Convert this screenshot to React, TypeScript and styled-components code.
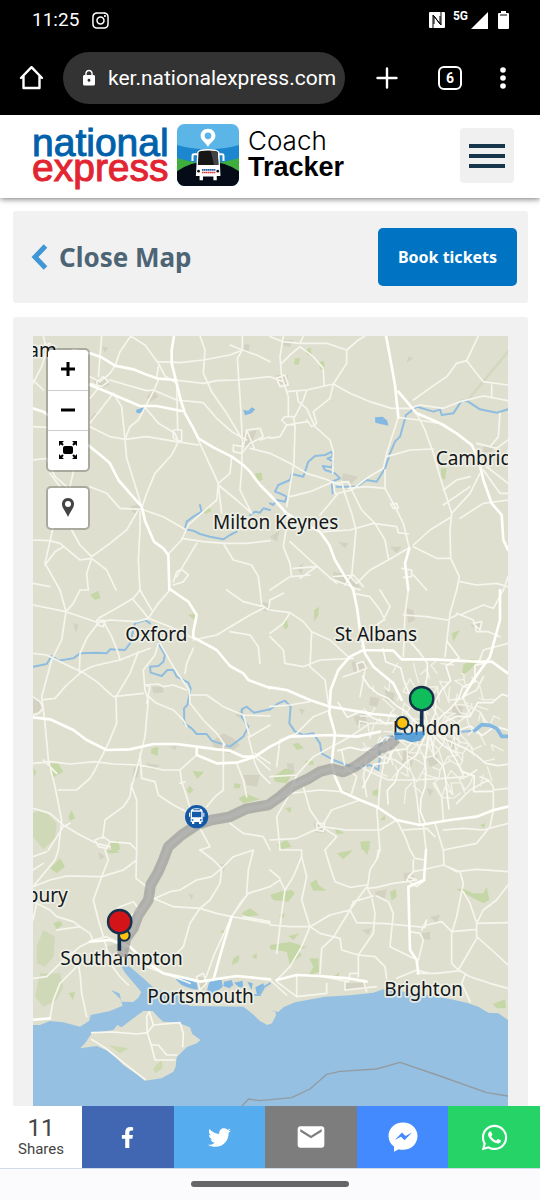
import React from "react";
import styled, { createGlobalStyle } from "styled-components";
import { FaFacebookF, FaInstagram, FaTwitter, FaWhatsapp } from "react-icons/fa";
import { MdEmail, MdLock } from "react-icons/md";

const GlobalStyle = createGlobalStyle`
  * { box-sizing: border-box; }
  body { margin: 0; background: #fff; font-family: "Noto Sans", sans-serif; }
  button, input { font: inherit; border: 0; padding: 0; margin: 0; }
  button { cursor: pointer; }
  a { color: inherit; text-decoration: none; }
  svg { display: block; flex: none; }
`;

const Screen = styled.div`
  display: flex;
  flex-direction: column;
  height: 100vh;
  overflow: hidden;
`;

/* ---------- phone and browser bars ---------- */

const StatusBar = styled.div`
  display: flex;
  align-items: center;
  gap: 12px;
  height: 40px;
  padding: 0 31px 0 32px;
  background: #000;
  color: #fff;
  font-family: Roboto, sans-serif;
`;

const Clock = styled.time`
  font-size: 19px;
  font-weight: 400;
  line-height: 24px;
`;

const StatusIcons = styled.div`
  display: flex;
  align-items: center;
  margin-left: auto;
`;

const Network = styled.span`
  margin: 0 3px 8px 8px;
  font-size: 12px;
  font-weight: 700;
  line-height: 14px;
`;

const BatterySlot = styled.span`
  margin-left: 10px;
`;

const BrowserBar = styled.div`
  display: flex;
  align-items: center;
  height: 75px;
  padding: 0 27px 0 19px;
  background: #000;
  color: #fff;
`;

const BarButton = styled.button<{ $gap?: number }>`
  display: flex;
  align-items: center;
  justify-content: center;
  margin-left: ${(p) => p.$gap ?? 0}px;
  background: none;
  color: #fff;
`;

const AddressBar = styled.label`
  display: flex;
  flex: 1;
  align-items: center;
  gap: 10px;
  min-width: 0;
  height: 52px;
  margin-left: 19px;
  padding: 0 8px 0 17px;
  border-radius: 26px;
  background: #333;
`;

const AddressInput = styled.input`
  flex: 1;
  min-width: 0;
  background: none;
  outline: none;
  color: #fff;
  font-family: Roboto, sans-serif;
  font-size: 21px;
  line-height: 26px;
`;

const TabCount = styled.span`
  display: flex;
  align-items: center;
  justify-content: center;
  width: 24px;
  height: 24px;
  border: 2px solid #fff;
  border-radius: 6px;
  font-family: Roboto, sans-serif;
  font-size: 14px;
  font-weight: 700;
  line-height: 20px;
`;

/* ---------- site header ---------- */

const SiteHeader = styled.header`
  position: relative;
  display: flex;
  align-items: center;
  height: 83px;
  padding: 0 26px 2px 32px;
  background: #fff;
  box-shadow: 0 1px 6px rgba(0, 0, 0, 0.55);
  z-index: 1;
`;

const BrandLink = styled.a`
  display: flex;
  align-items: center;
  padding-bottom: 2px;
`;

const Wordmark = styled.span`
  display: flex;
  flex-direction: column;
  width: 145px;
  font-family: "Liberation Sans", sans-serif;
  font-size: 39px;
  line-height: 25px;
`;

const WordLine = styled.span<{ $color: string }>`
  color: ${(p) => p.$color};
  -webkit-text-stroke: 1px ${(p) => p.$color};
`;

const ProductName = styled.span`
  display: flex;
  flex-direction: column;
  margin-left: 9px;
  padding-bottom: 1px;
  color: #000;
  font-family: "Liberation Sans", sans-serif;
  font-size: 27px;
  line-height: 27px;
`;

const LightWord = styled.span`
  font-family: Inter, sans-serif;
  font-size: 26px;
  font-weight: 300;
`;

const MenuButton = styled.button`
  display: flex;
  align-items: center;
  justify-content: center;
  width: 54px;
  height: 55px;
  margin-left: auto;
  border-radius: 4px;
  background: #f0f0f0;
`;

/* ---------- page content ---------- */

const Content = styled.main`
  display: flex;
  flex: 1;
  flex-direction: column;
  gap: 14px;
  min-height: 0;
  padding: 13px 12px 0 13px;
`;

const TitleCard = styled.section`
  display: flex;
  align-items: center;
  justify-content: space-between;
  padding: 17px 11px 17px 18px;
  border-radius: 3px;
  background: #f1f1f1;
`;

const CloseLink = styled.a`
  display: flex;
  align-items: center;
  gap: 11px;
  color: #4d6475;
  font-size: 26px;
  font-weight: 700;
  line-height: 36px;
`;

const BookButton = styled.button`
  width: 139px;
  height: 58px;
  border-radius: 5px;
  background: #0074c2;
  color: #fff;
  font-size: 16px;
  font-weight: 700;
  line-height: 22px;
`;

const MapCard = styled.section`
  display: flex;
  flex: 1;
  min-height: 0;
  padding: 19px 20px 0;
  border-radius: 3px 3px 0 0;
  background: #f1f1f1;
`;

const MapFrame = styled.div`
  position: relative;
  flex: 1;
  min-width: 0;
  overflow: hidden;
`;

const MapDrawing = styled.svg`
  width: 100%;
  height: 100%;
`;

const MapControls = styled.div`
  position: absolute;
  top: 12px;
  left: 13px;
  display: flex;
  flex-direction: column;
  gap: 14px;
`;

const ControlGroup = styled.div`
  display: flex;
  flex-direction: column;
  width: 44px;
  border: 2px solid rgba(0, 0, 0, 0.24);
  border-radius: 5px;
  background: #fff;
  background-clip: padding-box;
`;

const ControlButton = styled.button`
  display: flex;
  align-items: center;
  justify-content: center;
  height: 40px;
  padding-bottom: 2px;
  border-radius: 3px;
  background: none;

  & + & {
    border-top: 1px solid #ccc;
    border-radius: 0 0 3px 3px;
  }
`;

const PlaceLabel = styled.text`
  fill: #14171a;
  stroke: rgba(240, 241, 232, 0.85);
  stroke-width: 11px;
  stroke-linejoin: round;
  paint-order: stroke;
  font-family: "Noto Sans", sans-serif;
  font-size: 57px;
`;

/* ---------- share bar ---------- */

const ShareBar = styled.footer`
  display: grid;
  grid-template-columns: 82px repeat(5, 1fr);
  height: 63px;
  border-bottom: 1px solid #cfdbe8;
  background: #fff;
`;

const ShareCount = styled.div`
  display: flex;
  flex-direction: column;
  align-items: center;
  justify-content: center;
  padding-bottom: 1px;
  color: #444;
  font-family: Roboto, sans-serif;
  font-size: 15px;
  line-height: 18px;
`;

const CountNumber = styled.strong`
  font-size: 24px;
  font-weight: 400;
  line-height: 24px;
`;

const ShareLink = styled.a<{ $color: string }>`
  display: flex;
  align-items: center;
  justify-content: center;
  background: ${(p) => p.$color};
  color: #fff;
`;

const GestureBar = styled.div`
  display: flex;
  align-items: center;
  justify-content: center;
  height: 31px;
  padding-bottom: 2px;
  background: #fbfbfe;
`;

const GestureHandle = styled.span`
  width: 158px;
  height: 6px;
  border-radius: 3px;
  background: #666;
`;

/* ---------- map data: six sheets of 720 x 780 units ---------- */

type Sheet = { x: number; y: number; roads: string[]; motorways: string[]; rivers: string[]; woods: string[]; towns: string[] };

const sheets: Sheet[] = [
  {
    x: 0,
    y: 0,
    motorways: [
      "M0 232 L40 245 L100 290 L180 350 L215 378 L240 400 L265 450 L300 490 L335 530 L345 572 L372 635 L400 655 L415 675 L418 780",
      "M130 60 L180 70 L215 82 L255 107 L310 118 L345 132 L380 145 L435 150",
      "M432 18 L425 60 L425 100 L440 160 L452 210 L465 250 L490 295 L505 325 L550 352 L605 380 L640 405 L660 425 L690 465 L720 495",
      "M180 165 L230 185 L330 228 L380 228 L455 243",
    ],
    roads: [
      "M40 18 L50 60 L35 110 L9 160 M9 60 L60 40",
      "M180 140 L210 155 L240 130 L255 107 L270 65 L302 18",
      "M180 205 L205 175 L200 155 L220 140 L235 155 L215 170 L180 160",
      "M302 18 L345 45 L385 100 L405 138 L440 160",
      "M215 18 L210 80 L205 140",
      "M380 95 L450 98 L520 90 L600 75 L637 60 M380 145 L385 110",
      "M510 18 L525 60 L520 130 L545 185 L590 250 L635 325",
      "M637 18 L637 60 L622 85 L630 200 L637 330 L635 420 L630 480 L665 550",
      "M637 60 L680 75 L720 95 M600 45 L637 60",
      "M435 150 L520 160 L560 152 L620 150 L720 140",
      "M240 150 L290 165 L350 182 L370 180 L440 210 L520 218 L560 265 L605 305 L650 330",
      "M250 190 L275 230 L285 330 L290 385 L320 480 L335 530",
      "M180 280 L230 215 L250 190",
      "M180 290 L240 320 L285 328 L350 320 L440 335 L505 345",
      "M370 185 L385 150 M370 185 L345 232 L325 270 L300 290 L285 328",
      "M345 232 L385 280 L435 310 L445 335 L425 375 L375 430 L350 490 L335 535",
      "M430 300 L455 300 L455 335 L430 325 Z M440 160 L443 300",
      "M180 470 L230 490 L270 535 L335 538 L400 560 L465 598",
      "M505 330 L535 395 L565 460 L560 510 L520 545 L475 585 L455 630 L415 672",
      "M565 465 L620 510 L665 550 M565 465 L575 550",
      "M605 380 L600 430 L565 460",
      "M610 345 L640 350 L650 300 L690 295 L700 320 L660 340 L635 370 L610 365 Z M650 300 L675 360 M690 330 L720 320 M660 355 L720 370",
      "M9 390 L50 385 L75 440 L110 470 M60 430 L90 470 M130 425 L120 470",
      "M125 600 L150 645 L185 680 L240 640 L290 600 L325 540 M330 545 L330 600 L325 690 L330 780",
      "M9 630 L60 632 L90 640 L150 690 L185 685",
      "M185 685 L230 720 L258 780 M185 685 L170 730 L175 780 L150 780",
      "M70 590 L45 700 L90 780 M45 705 L75 665 L100 650",
      "M455 625 L520 635 L585 640 L650 640 L720 632",
      "M580 640 L610 690 L665 705 L685 740 L690 780",
      "M430 755 L440 725 L455 718 L475 735 L460 755 L430 765 M500 640 L440 740",
      "M9 760 L60 770 M9 150 L40 180 M9 290 L50 292",
    ],
    rivers: [
      "M510 525 L515 545 L490 560 L470 575 L465 598 L490 602 L510 612 L540 620 L580 628 L600 615 L620 605 M660 555 L675 545 L690 548 L700 535 L720 540",
    ],
    woods: ["M675 430 L695 428 L698 450 L680 455 Z", "M520 540 L535 530 L545 543 L525 553 Z"],
    towns: ["M190 150 L225 140 L240 165 L205 178 Z", "M350 200 L370 180 L385 200 L360 215 Z", "M635 310 L680 300 L665 345 L630 350 Z", "M300 530 L335 520 L340 545 L310 550 Z", "M195 248 L205 255 L185 278 L182 265 Z", "M645 40 L660 45 L655 70 L638 65 Z", "M215 50 L235 52 L225 68 Z"],
  },
  {
    x: 720,
    y: 0,
    motorways: [
      "M348 18 L358 70 L375 165 L385 262",
      "M0 495 L50 550 L100 580 L150 605 L178 645 L195 690 L225 740 L250 780",
      "M385 185 L440 250 L510 280 L560 310 L605 345 L625 385 L640 450 L665 520 L695 555 L700 630 L714 660",
      "M418 655 L405 700 L415 780",
    ],
    roads: [
      "M0 20 L40 35 L90 40 L170 40 L230 60 L265 30",
      "M265 30 L285 18 M40 18 L30 80 L35 140 L55 200 L55 255",
      "M35 100 L65 70 L90 50 L130 80 L160 115 L162 165 M90 40 L100 18",
      "M0 140 L40 155 L50 185 L110 180 L190 162 L240 190 L300 215 L365 235 L420 235 L450 225 L520 235 L570 215 L640 198 L714 212",
      "M190 162 L230 100 L230 60 M190 162 L180 205 L130 245 L140 280 L125 290 L110 270",
      "M20 145 L45 135 L55 165 L30 170 Z M80 185 L85 215 L110 235 L135 290 L180 330 L190 365 L188 430",
      "M45 260 L70 260 L75 285 L50 285 L35 270 Z M0 325 L30 320 L50 285 L110 275 M75 285 L72 400 L60 470 L50 530",
      "M110 180 L100 210 L75 260",
      "M0 370 L60 400 L110 430 L160 445 L210 465",
      "M60 500 L120 485 L190 455 M150 555 L205 490",
      "M190 460 L235 455 L245 480 L195 492 Z M215 455 L225 492",
      "M245 480 L290 445 L340 415 L350 370 L385 262",
      "M235 475 L290 470 L345 475 M245 480 L275 540 L315 580 L345 630 L355 685",
      "M225 492 L245 550 L258 600 L245 740",
      "M385 262 L445 270 L520 282 L560 310",
      "M430 210 L500 160 L530 140 L560 100 L590 92 L625 18 M590 92 L640 155 L714 165 M665 165 L665 200",
      "M440 250 L465 300 L490 370 L510 440 L545 550",
      "M350 380 L420 360 L490 357 M345 420 L345 475 L375 530 L400 580 L418 655",
      "M362 522 L380 520 L385 535 L370 535 Z",
      "M545 550 L540 600 L542 685 L568 740 L560 780",
      "M545 560 L480 600 L430 645 M545 550 L600 490 L630 430",
      "M520 480 L560 450 L600 440 M520 525 L600 470",
      "M620 340 L680 355 L714 330 M690 250 L685 320 L660 350",
      "M640 420 L690 490 L714 490 M650 410 L714 460 M570 565 L640 520 L714 510",
      "M160 605 L240 600 L310 580 L380 590 L385 608 L415 612",
      "M55 555 L40 650 L60 700 L65 740 L120 735 M60 635 L120 690 L200 760 M70 715 L140 710 L90 745 M0 780 L60 740",
      "M415 655 L355 690 L300 720 L260 760 M430 650 L500 685 L542 685",
      "M395 715 L425 720 L425 740 L400 742 M190 740 L250 735 L280 770 M180 745 L270 780 M225 765 L240 740 L260 760",
      "M570 755 L620 765 L680 760 L714 770 M700 780 L714 740 M430 735 L470 780",
    ],
    rivers: [
      "M0 520 L10 525 L20 510 L45 515 L50 500 L30 490 L15 485 L25 465 L60 450 L65 432 L100 440 L115 395 L135 378 L165 375 L185 365 L188 380 L172 385 L190 395 L185 412 L158 408 L165 420 L195 430 L210 445 L185 455 L188 490",
      "M200 470 L260 470 L290 450 L320 455 L345 415 L360 370 L375 335 L390 320 L408 255 L440 230 L490 245 L510 238 L515 255 L550 250 L575 212 L590 212 L630 238 L680 248 L714 238",
    ],
    woods: ["M75 85 L92 85 L85 105 L72 103 Z", "M105 62 L122 52 L125 75 L112 75 Z", "M147 95 L162 92 L165 120 L150 118 Z", "M512 415 L530 415 L525 450 L515 445 Z"],
    towns: ["M40 30 L70 30 L60 50 L40 48 Z", "M415 80 L430 85 L410 98 Z", "M220 430 L265 440 L245 460 L215 450 Z", "M20 135 L55 135 L50 165 L25 160 Z", "M640 350 L675 345 L665 370 L640 365 Z", "M190 725 L240 735 L270 770 L250 780 L190 745 Z", "M360 650 L395 650 L380 670 Z", "M80 715 L100 700 L95 735 Z", "M205 635 L235 640 L225 655 Z", "M0 620 L30 600 L20 635 Z"],
  },
  {
    x: 0,
    y: 780,
    motorways: [
      "M418 -4 L445 15 L475 35 L500 75 L490 125 L490 142 L560 180 L600 228 L640 250 L655 270 L720 294",
      "M9 382 L60 388 L130 420 L170 450 L230 480 L300 478 L370 462 L440 462 L500 470 L560 478 L600 482 L640 500 L675 500 L720 470",
      "M500 470 L500 495 L560 520 L620 518 L675 500",
    ],
    roads: [
      "M90 0 L108 65 L95 150 L65 210 L35 320 L45 400 L55 510 L75 590 L95 690 L85 780",
      "M9 45 L108 65 L205 98 L240 90 L320 95 L355 85 L420 110 L490 145",
      "M108 65 L130 40 L150 0 M205 98 L170 145 L150 190 L148 245 M200 90 L225 92 L220 110 L202 105 Z",
      "M220 95 L245 140 L265 190 L270 210",
      "M205 85 L250 60 L310 25 L330 0 M310 30 L340 65 L355 85 M330 0 L365 60 M420 0 L385 40 L355 85",
      "M9 190 L50 195 L110 225 L155 245 L190 228 L270 210 L320 190 L360 175",
      "M35 330 L75 325 L110 285 L155 245 L200 275 L250 320 L340 310",
      "M325 185 L300 250 L258 320 L260 400 L235 460 L195 540 L180 565 L140 600 L85 600",
      "M385 160 L375 195 L340 240 L345 300 L355 330 L345 440 L330 500 L305 590 L320 630 L320 780",
      "M345 285 L360 290 L350 340 M345 285 L385 282 L400 290 L430 285 L470 300 M350 315 L380 340 L430 360 L460 390 L470 410",
      "M390 160 L430 230 L450 260 L478 300 L480 340 L520 390 L560 430 L585 465",
      "M490 150 L560 135 L610 105 L660 75 L700 55 M490 175 L470 220 L465 250",
      "M690 0 L695 45 L715 60 L720 30 M590 0 L640 35 L700 50 M600 125 L660 135 L685 170 L690 220",
      "M480 315 L530 315 L580 350 L640 375 L720 378",
      "M9 320 L30 335 L40 355 L25 370 L9 375",
      "M9 520 L60 515 L120 522 L195 515 L250 522 L330 525 L400 540 L450 540 L500 495",
      "M40 510 L80 550 M330 490 L335 565 L375 575 L385 615 L430 645 L470 665",
      "M450 540 L455 575 L470 620 L485 670 M450 580 L465 575",
      "M580 460 L580 600 L555 620 L530 650 M620 520 L640 570 L650 620",
      "M655 440 L675 520 L690 550 L720 580 M675 490 L720 520 M675 500 L720 540 M640 375 L660 440 L720 405",
      "M9 655 L60 670 L100 705 L150 735 L200 760 L240 770",
      "M55 780 L100 710 L120 700 M305 580 L300 620 L280 650 L225 690 L218 745",
      "M195 750 L220 740 L240 755 L230 775 L205 770 Z M240 755 L300 760 L320 780",
      "M510 715 L540 770 L510 780 M600 700 L640 730 L700 740 L720 780",
    ],
    rivers: [
      "M9 230 L50 222 L65 198 L85 212 L130 205 L150 190 L200 188 L230 190 L240 178 L285 180 L300 160 L315 100 L345 90 L360 100",
      "M385 160 L405 195 L400 215 L385 228 L360 230 L362 248 L395 258 L412 240 L430 240 L440 260 L475 278 L482 295 L472 345 L462 355 L463 400 L485 415 L500 432 L530 432 L545 452 L600 470 L640 440 L655 410 L635 380 L635 358 L650 350 L672 368 L720 358",
    ],
    woods: ["M180 15 L205 2 L212 25 L195 30 Z", "M50 520 L85 520 L100 545 L70 562 Z", "M365 475 L385 470 L383 498 L362 490 Z", "M487 543 L522 545 L502 567 Z", "M115 680 L125 660 L135 685 L120 692 Z", "M470 600 L480 587 L490 600 L478 613 Z", "M612 580 L632 582 L630 595 L612 595 Z", "M625 625 L650 612 L690 628 L640 640 Z", "M240 760 L265 750 L270 780 L245 780 Z", "M475 75 L495 70 L493 90 Z", "M9 535 L20 545 L12 560 Z"],
    towns: ["M365 290 L400 290 L400 308 L370 310 Z", "M545 455 L580 430 L610 445 L630 465 L600 490 L555 480 Z", "M615 375 L640 355 L640 390 Z", "M690 35 L720 40 L720 65 L695 60 Z", "M640 555 L690 555 L680 590 L650 585 Z", "M310 535 L330 525 L325 560 L310 570 Z", "M345 520 L390 525 L370 540 Z", "M130 100 L145 105 L138 130 Z", "M9 315 L35 335 L30 365 L9 370 Z", "M420 470 L440 468 L435 480 Z"],
  },
  {
    x: 720,
    y: 780,
    motorways: [
      "M0 292 L50 300 L120 330 L180 350 L250 362 L310 372 L375 378",
      "M250 0 L262 60 L270 120 L285 190 L310 230 L370 280 L395 330",
      "M240 200 L280 180 L370 182 L395 208 L490 208 L560 212 L620 215 L665 215 L714 250",
      "M240 200 L205 240 L182 300 L178 370 L195 430 L185 520 L195 560 L215 605 L270 630 L320 650 L380 690 L450 705 L540 690 L620 680 L665 662 L714 650",
      "M690 0 L690 90 L660 200 L610 270 L580 320",
      "M0 470 L60 440 L180 435 L260 440 L330 425",
    ],
    roads: [
      "M0 60 L60 68 L100 95 L125 125 L180 150 L240 205 M0 140 L40 180 L45 220 L100 230 L150 210 L250 205",
      "M125 125 L120 230 L165 270 L175 340 M60 68 L40 100 L0 130",
      "M415 0 L405 70 L400 200 M400 75 L470 80 L530 90 L560 75 M560 0 L540 70 L525 200",
      "M560 70 L610 90 L620 125 L655 125 L690 140 M610 100 L635 95 L630 120 Z M570 75 L640 45 L670 55 L700 0",
      "M330 0 L360 50 L340 90 L300 120 L275 170 M250 10 L300 20 L330 60 L345 90",
      "M20 530 L30 450 L80 430 L130 380 L180 360 M0 350 L60 345 L120 335",
      "M0 560 L80 555 L130 500 L185 470 L240 440 L300 400 L375 400",
      "M80 555 L60 610 L20 680 L30 780 M0 640 L60 610 L150 600 L215 605",
      "M100 590 L120 660 L155 710 L80 745 L0 750 M155 710 L230 720 L330 720 L380 690",
      "M155 710 L200 740 L165 780 M155 710 L185 660 L270 630 M140 700 L165 700 L160 725 L140 720 Z",
      "M320 650 L325 720 L330 780 M345 500 L330 580 L325 650 M380 690 L405 740 L420 780",
      "M450 705 L440 620 L430 560 M520 690 L515 620 L495 580 M495 700 L520 780 M460 705 L468 780",
      "M670 660 L670 590 L655 570 L630 560 M670 600 L714 595 M670 660 L660 710 L620 760 L520 780",
      "M580 320 L620 300 L640 260 M540 330 L580 325 L600 370 L560 400 M625 220 L640 180 L714 160",
      "M520 720 L580 715 L640 720 L714 700 M400 720 L470 715 L495 740 M0 30 L40 10",
      "M280 475 L330 500 L375 510 L420 540 M255 520 L300 545 L355 570 L430 570 L520 565 L590 560 L620 540",
      "M215 480 L225 530 L260 560 L245 610 M290 510 L280 560 L290 620 M560 640 L600 600 L655 570",
      "M265 245 L290 235 L280 215 L260 220 Z M220 260 L265 245 M285 240 L270 320",
    ],
    rivers: [
      "M0 358 L25 340 L45 332 L62 350 L58 400 L75 425 L100 435 L130 430 L150 460 L155 490 L190 510 L230 525 L260 535 L300 525 L325 540 L330 500 L325 470 L350 440 L380 438",
      "M575 425 L610 422",
    ],
    woods: ["M38 100 L50 85 L55 110 L45 120 Z", "M132 60 L147 50 L145 75 L133 95 Z", "M580 225 L600 207 L625 210 L600 240 L575 258 Z", "M68 462 L85 458 L102 475 L80 480 Z", "M10 560 L45 535 L70 545 L50 580 L15 575 Z", "M105 512 L130 512 L130 525 L108 522 Z", "M308 602 L325 597 L322 620 L308 615 Z", "M330 690 L345 675 L345 690 Z", "M195 715 L225 730 L200 732 Z", "M270 755 L300 752 L298 780 L275 780 Z", "M20 765 L50 750 L65 770 L35 778 Z", "M45 655 L65 652 L60 670 Z", "M630 705 L645 700 L643 715 Z", "M545 130 L570 120 L550 155 Z"],
    towns: ["M300 320 L330 325 L320 350 L298 345 Z", "M345 300 L375 310 L370 335 L350 330 Z", "M470 300 L500 310 L505 340 L475 330 Z", "M550 340 L580 350 L570 390 L545 370 Z", "M400 480 L430 500 L425 530 L395 520 Z", "M470 500 L500 490 L505 520 L480 530 Z", "M345 460 L365 470 L360 500 L340 490 Z", "M520 440 L560 450 L550 480 L520 470 Z", "M250 380 L285 370 L290 400 L260 405 Z", "M410 55 L430 60 L435 90 L415 100 Z", "M245 215 L290 215 L290 245 L250 245 Z", "M130 700 L170 700 L165 730 L140 728 Z", "M50 520 L70 520 L75 560 L55 550 Z", "M470 595 L490 600 L480 620 Z", "M220 600 L235 605 L230 620 Z", "M85 355 L105 360 L95 375 Z", "M600 105 L635 95 L625 125 Z"],
  },
  {
    x: 0,
    y: 1560,
    motorways: [
      "M0 510 L60 505 M180 275 L240 270 L300 290 L340 330 L400 370 L470 385 L510 395 L620 378 L720 388",
      "M550 390 L575 300 L605 200",
    ],
    roads: [
      "M9 110 L60 90 L110 78 L215 80 L280 60 L320 30 M215 80 L235 30 L225 0 M85 0 L75 30 L9 110",
      "M320 0 L318 85 L350 110 M215 80 L190 150 L205 210 L225 275",
      "M9 210 L20 160 L60 180 L80 200 L130 215 L150 230 L180 250 L190 275",
      "M9 385 L50 380 L90 340 L150 290 L190 270 L230 260 L290 290",
      "M60 505 L70 450 L90 400 L145 345 L150 370 L155 430 L170 500",
      "M80 240 L150 230 M240 200 L270 170 L310 155 L325 175 L300 200",
      "M225 275 L240 340 L270 380 L295 405 M370 145 L430 170 L510 175 L560 190 L605 200 L720 220",
      "M375 145 L420 125 L450 120 L500 90 L545 80 L575 55 L610 20 L670 0",
      "M510 0 L550 30 L575 55 L570 100 L540 150 L510 175 L480 220 L460 290 L420 330",
      "M720 110 L655 130 L605 200 M670 0 L655 60 L650 130 M655 130 L630 160 L605 200 M605 200 L550 320 L525 390",
      "M640 200 L720 215 M500 380 L520 370 L530 400 L510 420 Z",
      "M9 20 L50 5 M9 60 L40 40",
      "M350 350 L430 380 L480 400",
    ],
    rivers: ["M720 400 L695 415 L690 435 L675 435"],
    woods: ["M60 55 L90 25 L105 50 L80 70 Z", "M70 220 L90 212 L98 225 L80 238 Z", "M635 190 L660 175 L688 195 L650 200 Z", "M610 325 L628 315 L625 335 L605 345 Z", "M570 245 L590 235 L590 255 Z", "M665 320 L680 310 L680 328 Z", "M230 0 L260 0 L268 8 L235 10 Z", "M115 430 L135 425 L130 450 Z"],
    towns: ["M230 290 L290 270 L320 310 L340 350 L270 350 Z", "M565 45 L590 40 L580 65 Z", "M475 130 L490 135 L485 150 Z", "M500 380 L530 385 L520 420 L500 415 Z", "M205 5 L225 20 L210 30 Z"],
  },
  {
    x: 720,
    y: 1560,
    motorways: ["M468 0 L462 90 L415 110 L420 300 L440 330 L445 370", "M20 390 L80 375 L150 378 L235 385 L290 395"],
    roads: [
      "M0 110 L30 90 L45 120 L35 190 L20 310 M0 60 L30 85 M45 120 L70 80 L95 20 L95 0 L30 0",
      "M95 20 L110 80 L95 150 L120 230 L95 290 L60 350 L20 390 M0 225 L60 230 L120 230",
      "M165 0 L180 50 L195 95 L240 112 L290 105 M330 0 L320 30 L325 0 M325 20 L300 60 L292 115 L305 140 L315 190 L310 250 L265 315 L265 380",
      "M290 110 L240 180 L190 262 L155 295 L150 370 M240 180 L180 195 L120 230 L150 250 L210 265 L215 300 L265 315 L315 320 L345 350 L350 385",
      "M310 138 L250 155 L240 180 L260 218 L340 220 L420 228 L465 232 L470 210 L455 240",
      "M320 138 L355 155 L370 190 L360 290 L430 325",
      "M292 115 L320 112 L370 100 L410 95 L440 90 L415 80 L430 65 L455 60",
      "M420 0 L435 25 L465 30 M430 30 L430 65 L410 90 L440 110 L465 90 M455 60 L520 45 L570 65 L580 100 L570 150 L560 200 L545 250",
      "M520 0 L522 45 L560 65 L620 58 L714 65 M580 125 L600 160 L620 220 L620 260 L665 300 L714 345",
      "M714 105 L680 150 L640 180 L620 220 L714 218",
      "M470 225 L515 215 L545 245 L620 238 M420 245 L450 250 L460 270 L445 330",
      "M620 265 L600 300 L565 360 L545 340 L545 250",
      "M440 370 L500 370 L570 362 L600 380 L660 400 L714 415",
      "M380 385 L440 360 L480 370 M20 395 L80 440 L170 430 M80 375 L80 440 M170 400 L170 430",
      "M150 378 L235 395 L240 370 L265 370 M225 395 L225 420 L320 410 M280 390 L290 425 M0 390 L50 435",
      "M585 375 L575 400 L600 455",
    ],
    rivers: [],
    woods: ["M200 10 L250 0 L220 28 Z", "M280 0 L295 0 L292 15 Z", "M120 100 L140 88 L145 105 L170 122 L130 122 Z", "M0 135 L30 125 L65 120 L75 130 L55 155 L10 150 Z", "M55 258 L88 250 L70 270 Z", "M0 285 L60 275 L110 292 L85 300 L95 315 L60 345 L50 305 L0 298 Z", "M118 325 L145 325 L148 365 L115 378 L130 350 Z", "M190 380 L210 365 L200 390 Z", "M360 125 L378 118 L380 140 L365 152 Z", "M560 118 L575 115 L610 130 L640 130 L650 110 L658 150 L640 160 L610 145 Z", "M668 462 L705 448 L708 475 L680 475 Z", "M25 195 L45 190 L40 205 Z"],
    towns: ["M480 200 L510 195 L500 220 Z", "M455 250 L480 245 L480 270 L460 268 Z", "M400 70 L430 65 L430 95 L405 95 Z", "M315 125 L350 118 L345 145 L320 140 Z", "M225 400 L290 398 L290 415 L225 418 Z", "M275 240 L305 235 L295 255 Z"],
  },
];

/* Forest and heath, drawn paler than the small woods. */
const heathPath =
  "M9 1450 L30 1440 L50 1450 L80 1480 L75 1525 L40 1558 L9 1520 Z M20 1850 L40 1800 L75 1820 L70 1880 L45 1910 L20 1900 Z M30 1930 L90 1930 L100 1970 L80 2010 L40 2030 L15 2000 Z";

/* City streets: a loose lattice with repeatable jitter, thinning out from the centre. */
const centre = { x: 1195, y: 1200 };
const chance = (n: number) => {
  const v = Math.sin(n * 127.1 + 11.7) * 43758.5453;
  return v - Math.floor(v);
};

const streetNode = (col: number, row: number) => {
  const seed = col * 31 + row * 57;
  const x = col * 25 + (chance(seed) - 0.5) * 22;
  const y = row * 25 + (chance(seed + 7) - 0.5) * 22;
  return { x: Math.round(centre.x + x * 0.94 - y * 0.34), y: Math.round(centre.y + x * 0.34 + y * 0.94) };
};

const cityStreets: string[] = [];
for (let col = -9; col <= 9; col++) {
  for (let row = -9; row <= 9; row++) {
    const spread = Math.hypot(col, row);
    if (spread > 8.6) continue;
    const keep = 1 - spread / 11;
    const from = streetNode(col, row);
    [
      [1, 0],
      [0, 1],
      [1, 1],
    ].forEach(([dc, dr], i) => {
      if (chance(col * 13 + row * 101 + i * 17) > keep * (i === 2 ? 0.45 : 0.8)) return;
      const to = streetNode(col + dc, row + dr);
      cityStreets.push(`M${from.x} ${from.y} L${to.x} ${to.y}`);
    });
  }
}

const arterials = Array.from({ length: 15 }, (_, s) => {
  const points = Array.from({ length: 8 }, (_, r) => {
    const angle = (s / 15) * Math.PI * 2 + (chance(s * 9 + r) - 0.5) * 0.22;
    const radius = 18 + r * (32 + chance(s) * 6);
    return `${Math.round(centre.x + Math.cos(angle) * radius)} ${Math.round(centre.y + Math.sin(angle) * radius)}`;
  });
  return "M" + points.join(" L");
});

const seaPath =
  "M0 2085 L30 2085 L60 2073 L100 2077 L150 2090 L178 2072 L182 2055 L240 2043 L278 2027 L272 2008 L243 1980 L268 1990 L275 2015 L310 2016 L325 2003 L334 1987 L318 1967 L285 1928 L268 1900 L290 1905 L305 1915 L340 1945 L362 1965 L380 1980 L440 1990 L480 2028 L640 2030 L668 2052 L690 2073 L712 2085 L726 2080 L738 2056 L736 2045 L718 2040 L745 2046 L760 2032 L795 2017 L885 2000 L960 1996 L1030 1988 L1060 1978 L1160 1990 L1260 2007 L1310 2018 L1345 2030 L1375 2048 L1405 2050 L1434 2070 L1434 2340 L0 2340 Z";

const islePath =
  "M150 2155 L165 2140 L185 2110 L215 2105 L250 2100 L262 2085 L275 2092 L300 2072 L340 2043 L368 2043 L385 2062 L400 2075 L440 2077 L480 2092 L487 2112 L512 2130 L500 2140 L470 2152 L440 2182 L437 2210 L430 2225 L395 2245 L345 2252 L320 2233 L280 2205 L255 2180 L228 2160 L200 2148 Z";

const harbourPaths = [
  "M437 1948 L450 1942 L480 1950 L500 1958 L503 1980 L480 1975 L455 1965 Z",
  "M537 1958 L550 1948 L575 1950 L578 1970 L560 1985 L550 2000 L530 1985 Z",
  "M582 1955 L605 1950 L610 1965 L598 1975 L580 1968 Z",
  "M612 1958 L638 1952 L640 1975 L625 1970 Z",
  "M652 1955 L668 1960 L665 1980 Z",
  "M676 1972 L700 1960 L704 1975 L690 1998 L680 1990 Z",
  "M318 240 L340 232 L345 238 L330 250 L320 249 Z",
  "M640 240 L655 242 L665 232 L676 238 L665 250 L645 256 Z",
  "M1035 262 L1058 260 L1072 272 L1075 287 L1052 282 L1036 278 Z",
];

const routePath =
  "M1098 1226 L1080 1245 L1048 1256 L1010 1285 L975 1310 L940 1326 L905 1316 L870 1325 L835 1346 L785 1370 L750 1400 L715 1425 L650 1436 L600 1460 L545 1470 L500 1485 L455 1515 L415 1550 L400 1590 L385 1625 L362 1665 L355 1710 L325 1755 L310 1795 L288 1825 L276 1880";

const places: { name: string; x: number; y: number; end?: boolean }[] = [
  { name: "Birmingham", x: 80, y: 82, end: true },
  { name: "Milton Keynes", x: 549, y: 597 },
  { name: "Cambridge", x: 1217, y: 405 },
  { name: "Oxford", x: 286, y: 932 },
  { name: "St Albans", x: 914, y: 932 },
  { name: "London", x: 1088, y: 1215 },
  { name: "Salisbury", x: 113, y: 1717, end: true },
  { name: "Southampton", x: 91, y: 1906 },
  { name: "Portsmouth", x: 352, y: 2018 },
  { name: "Brighton", x: 1063, y: 1997 },
];

function CoachMap() {
  return (
    <MapDrawing viewBox="9 18 1425 2310" preserveAspectRatio="xMidYMid slice" role="img" aria-label="Coach route from London to Southampton" fill="none" strokeLinejoin="round" strokeLinecap="round">
      <rect x="0" y="0" width="1440" height="2340" fill="#dfdfcf" />
      <path d={heathPath} fill="#cfd9b8" />
      {sheets.map((s, i) => (
        <g key={i} transform={`translate(${s.x} ${s.y})`}>
          <path d={s.towns.join(" ")} fill="#cfcdbd" opacity="0.75" />
          <path d={s.woods.join(" ")} fill="#c2d6a0" opacity="0.85" />
        </g>
      ))}
      <path d={seaPath} fill="#95c0e1" />
      <path d={islePath} fill="#dfdfcf" />
      <path d="M370 2215 L395 2190 L398 2215 L375 2230 Z M235 2145 L295 2155 L270 2170 Z" fill="#cddab0" />
      <path d={harbourPaths.join(" ")} fill="#83b8e2" />
      <path d="M1310 215 L1434 65" stroke="#d3d8c0" strokeWidth="8" />
      {sheets.map((s, i) => (
        <g key={i} transform={`translate(${s.x} ${s.y})`}>
          <path d={s.rivers.join(" ")} stroke="#8fbde0" strokeWidth="6" />
          <path d={s.roads.join(" ")} stroke="#f7f6ee" strokeWidth="5" />
        </g>
      ))}
      <path d={cityStreets.join(" ")} stroke="#f4f3ea" strokeWidth="4" />
      <path d={arterials.join(" ")} stroke="#faf9f3" strokeWidth="5" />
      {sheets.map((s, i) => (
        <path key={i} transform={`translate(${s.x} ${s.y})`} d={s.motorways.join(" ")} stroke="#fffffb" strokeWidth="8" />
      ))}
      <path d="M1334 1202 L1355 1184 L1380 1186 L1400 1195 L1415 1219 L1434 1219" stroke="#83b8e2" strokeWidth="11" />
      <path
        d="M185 2108 L250 2106 L320 2112 L352 2108 L350 2060 L358 2045 L370 2085 L352 2108 L365 2150 L375 2190 L435 2190 M370 2085 L450 2078 L460 2110 L458 2150 M365 2145 L385 2145 L410 2175 L440 2175 M185 2128 L228 2155 L280 2198 L345 2248"
        stroke="#f9f8f0"
        strokeWidth="5"
      />
      <path d="M636 2328 L656 2307 L690 2312 L785 2303 L840 2277 L890 2233 L930 2224 L1040 2217 L1110 2197 L1230 2238 L1370 2288 L1434 2298" stroke="#929ba2" strokeWidth="4" />
      {places.map((p) => (
        <PlaceLabel key={p.name} x={p.x} y={p.y} textAnchor={p.end ? "end" : "start"}>
          {p.name}
        </PlaceLabel>
      ))}
      <path d={routePath} stroke="#959595" strokeWidth="32" opacity="0.65" strokeLinecap="butt" />
      <path d={routePath} stroke="#b5b5b5" strokeWidth="12" opacity="0.7" strokeLinecap="butt" />
      <path d="M1092 1205 L1130 1210 L1180 1203 L1184 1215 L1170 1232 L1145 1237 L1120 1228 L1095 1230 Z" fill="#3a8fd6" opacity="0.8" />
      <g stroke="#14304a">
        <path d="M1175 1141 V1190 M268 1810 V1862" strokeWidth="11" strokeLinecap="butt" />
        <circle cx="1175" cy="1106" r="35" fill="#10bd5b" strokeWidth="7" />
        <circle cx="1117" cy="1179" r="18" fill="#ffc20e" strokeWidth="6" />
        <circle cx="283" cy="1816" r="16" fill="#ffc20e" strokeWidth="6" />
        <circle cx="269" cy="1775" r="35" fill="#d31519" strokeWidth="7" />
      </g>
      <circle cx="500" cy="1460" r="35" fill="#1459a8" />
      <g fill="#fff">
        <path d="M482 1444 Q482 1435 500 1435 Q518 1435 518 1444 V1476 H514 V1482 H507 V1476 H493 V1482 H486 V1476 H482 Z" />
        <path d="M477 1448 h3 v12 h-3 z M520 1448 h3 v12 h-3 z" />
      </g>
      <path d="M486 1445 H514 V1462 H486 Z M490 1438 H510 V1441 H490 Z" fill="#1459a8" />
      <path d="M485 1468 h5 v4 h-5 z M510 1468 h5 v4 h-5 z" fill="#1459a8" />
    </MapDrawing>
  );
}

function CoachBadge() {
  return (
    <svg width="62" height="62" viewBox="0 0 184 184" aria-hidden="true">
      <defs>
        <clipPath id="badge">
          <rect width="184" height="184" rx="22" />
        </clipPath>
      </defs>
      <g clipPath="url(#badge)">
        <rect width="184" height="184" fill="#5cb5e7" />
        <path d="M0 62 Q92 88 184 62 V130 H0 Z" fill="#1c86cf" />
        <path d="M0 102 L60 116 H124 L184 102 V150 H0 Z" fill="#3fae3d" />
        <path d="M0 140 Q40 112 92 112 Q144 112 184 140 V184 H0 Z" fill="#050b17" />
      </g>
      <path d="M92 14 C78 14 70 24 70 35 C70 49 86 56 92 68 C98 56 114 49 114 35 C114 24 106 14 92 14 Z" fill="#fff" />
      <circle cx="92" cy="35" r="10" fill="#5cb5e7" />
      <path d="M60 84 Q62 74 92 74 Q122 74 126 84 L129 154 H118 V167 H108 V156 H77 V167 H67 V154 H56 Z" fill="#fff" />
      <path d="M60 90 H50 Q46 90 46 96 V110 M125 90 H134 Q138 90 138 96 V110" fill="none" stroke="#fff" strokeWidth="6" />
      <path d="M64 84 Q66 79 92 79 Q118 79 121 84 L123 122 H62 Z" fill="#161616" />
      <path d="M100 80 Q118 80 121 84 L123 122 H110 Z" fill="#444" />
      <circle cx="64" cy="140" r="4" fill="#111" />
      <circle cx="121" cy="140" r="4" fill="#111" />
      <path d="M74 136 H114" stroke="#1c5ba8" strokeWidth="5" strokeDasharray="5 1" />
      <path d="M74 144 H114" stroke="#e0393e" strokeWidth="5" strokeDasharray="5 1" />
    </svg>
  );
}

export default function App() {
  return (
    <Screen>
      <GlobalStyle />
      <StatusBar>
        <Clock>11:25</Clock>
        <FaInstagram size={19} />
        <StatusIcons>
          <svg width="16" height="16" viewBox="0 0 16 16" aria-hidden="true">
            <rect width="16" height="16" rx="1" fill="#fff" />
            <path d="M4 16 V3 L11 12 V4 M12 0 V13 L5 4 V12" fill="none" stroke="#000" strokeWidth="1" />
          </svg>
          <Network>5G</Network>
          <svg width="17" height="17" viewBox="0 0 17 17" aria-hidden="true">
            <path d="M17 0 V17 H0 Z" fill="#fff" />
          </svg>
          <BatterySlot>
            <svg width="11" height="18" viewBox="0 0 11 18" aria-hidden="true">
              <path d="M3 0 H8 V2 H10 Q11 2 11 3 V17 Q11 18 10 18 H1 Q0 18 0 17 V3 Q0 2 1 2 H3 Z" fill="#fff" />
              <path d="M2 4 H9" stroke="#000" strokeWidth="1" />
            </svg>
          </BatterySlot>
        </StatusIcons>
      </StatusBar>

      <BrowserBar>
        <BarButton aria-label="Home">
          <svg width="25" height="25" viewBox="0 0 25 25" fill="none" stroke="#fff" strokeWidth="2.4" strokeLinejoin="round" strokeLinecap="round" aria-hidden="true">
            <path d="M2 13 L12.5 2.2 L23 13 M4.5 11 V23 H20.5 V11" />
          </svg>
        </BarButton>
        <AddressBar>
          <MdLock size={18} aria-hidden="true" />
          <AddressInput aria-label="Address" defaultValue="ker.nationalexpress.com" />
        </AddressBar>
        <BarButton $gap={31} aria-label="New tab">
          <svg width="22" height="22" viewBox="0 0 22 22" stroke="#fff" strokeWidth="2.4" strokeLinecap="round" aria-hidden="true">
            <path d="M11 1.5 V20.5 M1.5 11 H20.5" />
          </svg>
        </BarButton>
        <BarButton $gap={40} aria-label="Open tabs">
          <TabCount>6</TabCount>
        </BarButton>
        <BarButton $gap={31} aria-label="More options">
          <svg width="20" height="22" viewBox="0 0 20 22" fill="#fff" aria-hidden="true">
            <circle cx="10" cy="3" r="2.8" />
            <circle cx="10" cy="11" r="2.8" />
            <circle cx="10" cy="19" r="2.8" />
          </svg>
        </BarButton>
      </BrowserBar>

      <SiteHeader>
        <BrandLink href="#home">
          <Wordmark>
            <WordLine $color="#0061ab">national</WordLine>
            <WordLine $color="#e22530">express</WordLine>
          </Wordmark>
          <CoachBadge />
          <ProductName>
            <LightWord>Coach</LightWord>
            <b>Tracker</b>
          </ProductName>
        </BrandLink>
        <MenuButton aria-label="Menu">
          <svg width="36" height="24" viewBox="0 0 36 24" fill="#17354b" aria-hidden="true">
            <path d="M0 0 H36 V4 H0 Z M0 10 H36 V14 H0 Z M0 20 H36 V24 H0 Z" />
          </svg>
        </MenuButton>
      </SiteHeader>

      <Content>
        <TitleCard>
          <CloseLink href="#tracker">
            <svg width="17" height="26" viewBox="0 0 17 26" fill="none" stroke="#3f97d5" strokeWidth="5" aria-hidden="true">
              <path d="M14.5 2 L4 13 L14.5 24" />
            </svg>
            Close Map
          </CloseLink>
          <BookButton>Book tickets</BookButton>
        </TitleCard>

        <MapCard>
          <MapFrame>
            <CoachMap />
            <MapControls>
              <ControlGroup>
                <ControlButton aria-label="Zoom in">
                  <svg width="14" height="14" viewBox="0 0 14 14" stroke="#000" strokeWidth="3" aria-hidden="true">
                    <path d="M7 0 V14 M0 7 H14" />
                  </svg>
                </ControlButton>
                <ControlButton aria-label="Zoom out">
                  <svg width="14" height="14" viewBox="0 0 14 14" stroke="#000" strokeWidth="3" aria-hidden="true">
                    <path d="M0 7 H14" />
                  </svg>
                </ControlButton>
                <ControlButton aria-label="Fit route">
                  <svg width="20" height="20" viewBox="0 0 20 20" fill="#000" aria-hidden="true">
                    <rect x="5" y="6" width="10" height="8" rx="2" />
                    <path d="M1 1 H6 L1 6 Z M19 1 V6 L14 1 Z M1 19 V14 L6 19 Z M19 19 H14 L19 14 Z" />
                    <path d="M2 2 L5 5 M18 2 L15 5 M2 18 L5 15 M18 18 L15 15" stroke="#000" strokeWidth="2" />
                  </svg>
                </ControlButton>
              </ControlGroup>
              <ControlGroup>
                <ControlButton aria-label="Show my location">
                  <svg width="12" height="19" viewBox="0 0 12 19" aria-hidden="true">
                    <path d="M6 0 C2 0 0 3 0 6 C0 10 4 14 6 19 C8 14 12 10 12 6 C12 3 10 0 6 0 Z" fill="#444" />
                    <circle cx="6" cy="6" r="3" fill="#fff" />
                  </svg>
                </ControlButton>
              </ControlGroup>
            </MapControls>
          </MapFrame>
        </MapCard>
      </Content>

      <ShareBar>
        <ShareCount>
          <CountNumber>11</CountNumber>
          Shares
        </ShareCount>
        <ShareLink href="#facebook" $color="#4267b2" aria-label="Share on Facebook">
          <FaFacebookF size={21} />
        </ShareLink>
        <ShareLink href="#twitter" $color="#55acee" aria-label="Share on Twitter">
          <FaTwitter size={23} />
        </ShareLink>
        <ShareLink href="#email" $color="#7d7d7d" aria-label="Share by email">
          <MdEmail size={32} />
        </ShareLink>
        <ShareLink href="#messenger" $color="#448aff" aria-label="Share on Messenger">
          <svg width="30" height="30" viewBox="0 0 30 30" aria-hidden="true">
            <path d="M15 0.5 C6.5 0.5 0.5 6.5 0.5 14 C0.5 18.3 2.5 22 6 24.5 V29.8 L10.8 27.2 C12 27.6 13.5 27.8 15 27.8 C23.5 27.8 29.5 21.5 29.5 14 C29.5 6.5 23.5 0.5 15 0.5 Z" fill="#fff" />
            <path d="M6.8 18 L14 10.5 L17.5 14 L24 10.5 L16.5 18.2 L13 14.7 Z" fill="#448aff" />
          </svg>
        </ShareLink>
        <ShareLink href="#whatsapp" $color="#25d366" aria-label="Share on WhatsApp">
          <FaWhatsapp size={29} />
        </ShareLink>
      </ShareBar>
      <GestureBar>
        <GestureHandle />
      </GestureBar>
    </Screen>
  );
}
